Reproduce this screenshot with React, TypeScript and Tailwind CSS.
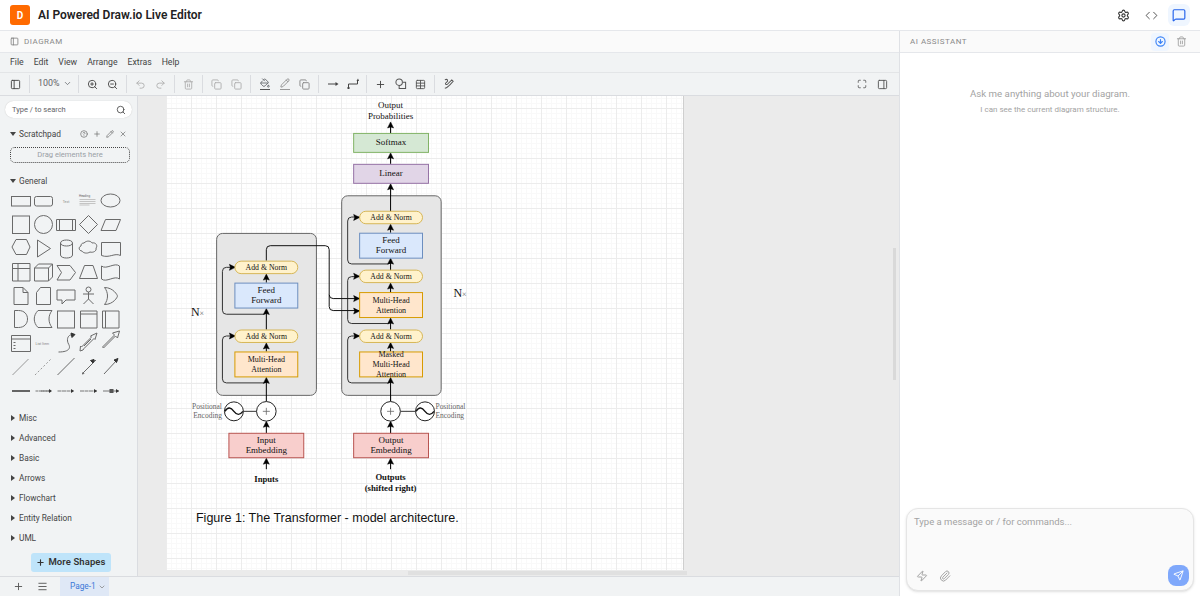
import {
  ChevronDown,
  CircleArrowDown,
  CircleHelp,
  Code,
  Copy,
  Maximize,
  Menu,
  MessageSquare,
  PaintBucket,
  Paperclip,
  PanelLeft,
  PanelRight,
  Pencil,
  Plus,
  Redo2,
  Search,
  Send,
  Settings,
  Table,
  Trash2,
  Undo2,
  X,
  Zap,
  ZoomIn,
  ZoomOut,
} from "lucide-react";
import { FC, ReactNode } from "react";

const Sep = () => <div className="mx-[3.5px] h-[18px] w-px shrink-0 bg-[#dadce0]" />;

const Tool: FC<{ children: ReactNode }> = ({ children }) => (
  <div className="flex h-5 w-5 shrink-0 items-center justify-center text-[#5f6368]">{children}</div>
);

const ArrowUp: FC<{ x: number; y: number }> = ({ x, y }) => (
  <polygon points={`${x},${y} ${x + 3},${y + 6} ${x},${y + 5} ${x - 3},${y + 6}`} fill="#000" stroke="#000" strokeWidth="0.5" />
);

const ArrowRight: FC<{ x: number; y: number }> = ({ x, y }) => (
  <polygon points={`${x},${y} ${x - 6},${y - 3} ${x - 5},${y} ${x - 6},${y + 3}`} fill="#000" stroke="#000" strokeWidth="0.5" />
);

const Up: FC<{ x: number; from: number; to: number }> = ({ x, from, to }) => (
  <g>
    <line x1={x} y1={from} x2={x} y2={to + 4} stroke="#000" />
    <ArrowUp x={x} y={to} />
  </g>
);

const Box: FC<{ x: number; y: number; h: number; w?: number; fill: string; stroke: string; lines: string[]; fs?: number; step?: number }> = ({
  x,
  y,
  h,
  w = 63,
  fill,
  stroke,
  lines,
  fs = 9,
  step = 10.3,
}) => {
  const start = y + h / 2 - ((lines.length - 1) * step) / 2 + 2.5;
  return (
    <g>
      <rect x={x} y={y} width={w} height={h} fill={fill} stroke={stroke} />
      {lines.map((l, i) => (
        <text key={l} x={x + w / 2} y={start + i * step} textAnchor="middle" fontSize={fs} fill="#111">
          {l}
        </text>
      ))}
    </g>
  );
};

const AddNorm: FC<{ x: number; y: number }> = ({ x, y }) => (
  <g>
    <rect x={x} y={y} width={63} height={12.5} rx={6.25} fill="#fff2cc" stroke="#d6b656" />
    <text x={x + 31.5} y={y + 8.8} textAnchor="middle" fontSize="7.8" fill="#111">
      Add &amp; Norm
    </text>
  </g>
);

const Plus2: FC<{ x: number; y: number }> = ({ x, y }) => (
  <g>
    <circle cx={x} cy={y} r={9.8} fill="#fff" stroke="#222" />
    <path d={`M${x - 3.5} ${y}h7M${x} ${y - 3.5}v7`} stroke="#666" fill="none" strokeWidth="0.8" />
  </g>
);

const Sine: FC<{ x: number; y: number }> = ({ x, y }) => (
  <g>
    <circle cx={x} cy={y} r={9.5} fill="#fff" stroke="#222" />
    <path d={`M${x - 9} ${y}c3 -5 6 -4 9 0s6 4 9 0`} stroke="#111" fill="none" strokeWidth="1.4" />
  </g>
);

const Diagram = () => (
  <svg viewBox="166 96 518 475" className="block h-full w-full font-['Liberation_Serif',serif]">
    {/* encoder */}
    <rect x="216.7" y="233.7" width="100" height="162.3" rx="6" fill="#e6e6e6" stroke="#666" />
    {/* decoder */}
    <rect x="342" y="196" width="99.7" height="200" rx="6" fill="#e6e6e6" stroke="#666" />

    <g fill="none" stroke="#333" strokeWidth="1">
      <path d="M266.5 381q0 2.5 -3 2.5h-37q-4 0 -4 -4v-39q0 -4 4 -4h9" />
      <path d="M266.5 312q0 2.7 -3 2.7h-37q-4 0 -4 -4v-39q0 -4 4 -4h9" />
      <path d="M391 381q0 2.5 -3 2.5h-36q-4 0 -4 -4v-39q0 -4 4 -4h8" />
      <path d="M391 321q0 3 -3 3h-36q-4 0 -4 -4v-39q0 -4 4 -4h8" />
      <path d="M391 262q0 2.3 -3 2.3h-36q-4 0 -4 -4v-39q0 -4 4 -4h8" />
    </g>
    <path d="M266.5 261v-11q0 -4 4 -4h55q4 0 4 4v45q0 4 4 4h27M329.5 295v12q0 4 4 4h27" fill="none" stroke="#111" />
    <ArrowRight x={235.5} y={267.7} />
    <ArrowRight x={235.5} y={336.5} />
    <ArrowRight x={360} y={217.7} />
    <ArrowRight x={360} y={276.7} />
    <ArrowRight x={360} y={336.5} />
    <ArrowRight x={360} y={299} />
    <ArrowRight x={360} y={311.5} />

    <Up x={391} from={134} to={122} />
    <Up x={391} from={164} to={153} />
    <Up x={391} from={212} to={184} />
    <Up x={391} from={233} to={224.5} />
    <Up x={391} from={271} to={258.5} />
    <Up x={391} from={293} to={283.5} />
    <Up x={391} from={330} to={318.5} />
    <Up x={391} from={352} to={343} />
    <Up x={391} from={402} to={378} />
    <Up x={391} from={434} to={422} />
    <Up x={391} from={470} to={459} />

    <Up x={266.5} from={283} to={274.5} />
    <Up x={266.5} from={330} to={309} />
    <Up x={266.5} from={352} to={343.5} />
    <Up x={266.5} from={402} to={378} />
    <Up x={266.5} from={434} to={422} />
    <Up x={266.5} from={470} to={459} />

    <line x1="243" y1="412" x2="257" y2="412" stroke="#333" />
    <line x1="401" y1="412" x2="416" y2="412" stroke="#333" />

    <text x="391" y="108" textAnchor="middle" fontSize="9" fill="#111">Output</text>
    <text x="391" y="119" textAnchor="middle" fontSize="9" fill="#111">Probabilities</text>

    <Box x={354} y={133.5} w={75} h={19} fill="#d5e8d4" stroke="#82b366" lines={["Softmax"]} />
    <Box x={354} y={164.5} w={75} h={19} fill="#e1d5e7" stroke="#9673a6" lines={["Linear"]} />

    <AddNorm x={360} y={211.5} />
    <Box x={360} y={233.5} h={25} fill="#dae8fc" stroke="#6c8ebf" lines={["Feed", "Forward"]} />
    <AddNorm x={360} y={270.5} />
    <Box x={360} y={293} h={25} fill="#ffe6cc" stroke="#d79b00" fs={8} step={10} lines={["Multi-Head", "Attention"]} />
    <AddNorm x={360} y={330.5} />
    <Box x={360} y={352.5} h={25} fill="#ffe6cc" stroke="#d79b00" fs={8} step={9.7} lines={["Masked", "Multi-Head", "Attention"]} />

    <AddNorm x={235} y={261.5} />
    <Box x={235} y={283.5} h={25} fill="#dae8fc" stroke="#6c8ebf" lines={["Feed", "Forward"]} />
    <AddNorm x={235} y={330.5} />
    <Box x={235} y={352.5} h={25} fill="#ffe6cc" stroke="#d79b00" fs={8} step={10} lines={["Multi-Head", "Attention"]} />

    <Plus2 x={266.5} y={412} />
    <Sine x={234} y={412} />
    <Plus2 x={391} y={412} />
    <Sine x={425.5} y={412} />

    <text x="222" y="409.5" textAnchor="end" fontSize="7.5" fill="#666">Positional</text>
    <text x="222" y="418.5" textAnchor="end" fontSize="7.5" fill="#666">Encoding</text>
    <text x="436" y="409.5" fontSize="7.5" fill="#666">Positional</text>
    <text x="436" y="418.5" fontSize="7.5" fill="#666">Encoding</text>

    <Box x={229} y={434} w={75} h={24.5} fill="#f8cecc" stroke="#b85450" lines={["Input", "Embedding"]} />
    <Box x={354} y={434} w={75} h={24.5} fill="#f8cecc" stroke="#b85450" lines={["Output", "Embedding"]} />

    <text x="266.5" y="483" textAnchor="middle" fontSize="8.7" fontWeight="700" fill="#111">Inputs</text>
    <text x="391" y="481" textAnchor="middle" fontSize="8.7" fontWeight="700" fill="#111">Outputs</text>
    <text x="391" y="491.5" textAnchor="middle" fontSize="8.8" fontWeight="700" fill="#111">(shifted right)</text>

    <text x="191" y="316" fontSize="12" fill="#111">N</text>
    <text x="199.5" y="316" fontSize="8" fill="#666">×</text>
    <text x="454" y="297" fontSize="12" fill="#111">N</text>
    <text x="462.5" y="297" fontSize="8" fill="#666">×</text>

    <text x="196" y="523" fontSize="12.55" fill="#111" className="font-['Liberation_Sans',sans-serif]">
      Figure 1: The Transformer - model architecture.
    </text>
  </svg>
);

const Palette = () => (
  <svg viewBox="0 186 137 214" className="block h-[214px] w-[137px]" fill="none" stroke="#6a6a6a" strokeWidth="1">
    {/* row 1 */}
    <rect x="11.5" y="195.5" width="19" height="9.5" />
    <rect x="34.5" y="195.5" width="18" height="9.5" rx="2" />
    <text x="66" y="201.5" textAnchor="middle" fontSize="3.5" stroke="none" fill="#888">Text</text>
    <text x="79" y="196" fontSize="3" stroke="none" fill="#666">Heading</text>
    <path d="M79.5 198.5h16M79.5 200.5h16M79.5 202.5h16M79.5 204h10" stroke="#c4c4c4" />
    <ellipse cx="110.5" cy="199.5" rx="9.5" ry="6.5" />
    {/* row 2 */}
    <rect x="12.5" y="215" width="17" height="17.5" />
    <circle cx="43.5" cy="223.5" r="9" />
    <path d="M56.5 218.5h19v11h-19zM59.5 218.5v11M72.5 218.5v11" />
    <path d="M88.5 214.5l9 9-9 9-9-9z" />
    <path d="M105.5 218.5h15l-4.5 11h-15z" />
    {/* row 3 */}
    <path d="M16 238.5h10.5l3.5 7.5-3.5 7.5h-10.5l-4-7.5z" />
    <path d="M37.5 239l13 8.5-13 8.5z" />
    <path d="M60.5 242c0-4 12-4 12 0v12c0 4-12 4-12 0zM60.5 242c0 4 12 4 12 0" />
    <path d="M84 242c3-3 7-2 8 0 4-1 6 3 4 5 1 3-3 5-6 4-3 2-7 1-8-1-3 0-4-4-1-5 0-2 1-3 3-3z" />
    <path d="M101.5 241.5h19v13c-6 -3-11 3-19 0z" />
    {/* row 4 */}
    <path d="M12.5 262.5h17.5v17.5h-17.5zM12.5 267.5h17.5M18 262.5v17.5" />
    <path d="M34.5 267l4-4h14v13l-4 4h-14zM34.5 267h14v13M48.5 267l4-4" />
    <path d="M57 264.5h13l5.5 7-5.5 7.5h-13l4.5-7.5z" />
    <path d="M84.5 264.5h8.5l4.5 13h-18z" />
    <path d="M101.5 265c5 4 13-4 18 0v13c-5-4-13 4-18 0z" />
    {/* row 5 */}
    <path d="M14 286.5h9l5 5v12h-14zM23 286.5v5h5" />
    <path d="M40.5 286.5h10v17h-14v-12z" />
    <path d="M57 289h18v10h-9l-4 4v-4h-5z" />
    <circle cx="88.5" cy="288.5" r="2.5" />
    <path d="M88.5 291v7M83 293h11M88.5 298l-5 5M88.5 298l5 5" />
    <path d="M104.5 286.5c9 0 13 8 13 8.5 0 1-4 8.5-13 8.5 4-5 4-12 0-17z" />
    {/* row 6 */}
    <path d="M14.5 309.5h4c6 0 9 4 9 8.5s-3 8.5-9 8.5h-4z" />
    <path d="M38 309.5h14c-4 5-4 12 0 17h-14c-5-5-5-12 0-17z" />
    <rect x="57.5" y="310" width="17" height="17" />
    <path d="M80.5 310h16.5v17h-16.5zM80.5 313h16.5" />
    <path d="M102.5 310h16.5v17h-16.5zM105.5 310v17" />
    {/* row 7 */}
    <path d="M11.5 334.5h19v16h-19zM11.5 338h19M15.5 341.5h-2M15.5 344.5h-2M15.5 347.5h-2" />
    <text x="35.5" y="344" fontSize="3.5" stroke="none" fill="#888">List Item</text>
    <path d="M58.5 351c12 0 12-5 10-8-2-4-1-8 2-9l3-.5" />
    <path d="M71 332l4 1.5-3 3z" fill="#333" stroke="#333" />
    <path d="M83 349l-3 1 .5-5 1 1 10-10-1-1 6.5-3-2 6.5-1-1-10 10z" />
    <path d="M84 345l7-7" />
    <path d="M102.5 346l12-12-2-2 7-2-2 7-2-2-12 12z" />
    {/* row 8 */}
    <path d="M12.5 374l16-16" stroke="#999" />
    <path d="M35 374l16-16" stroke="#999" strokeDasharray="2 2" />
    <path d="M57.5 374l17-17" />
    <path d="M82 373l14-14M94 359.5l-.5 2 2-2zM82 373l2-.5-1.5-1.5" />
    <path d="M104 373l13-14" />
    <path d="M118 357.5l-4 1.5 2.5 2.5z" fill="#333" stroke="#333" />
    <path d="M94 358.5l-3.5 1 2.5 2.5z" fill="#333" stroke="#333" />
    {/* row 9 */}
    <path d="M12 390h18" stroke="#555" strokeWidth="1.8" />
    <path d="M35.5 390h14M41 390h10" stroke="#777" strokeDasharray="3 0.5" />
    <path d="M49 388l3 2-3 2z" fill="#333" stroke="none" />
    <path d="M57.5 390h16" stroke="#777" strokeDasharray="4 0.5" />
    <path d="M71 388l3 2-3 2z" fill="#333" stroke="none" />
    <path d="M80 390h17" stroke="#777" strokeDasharray="4 0.5" />
    <path d="M94 388l3 2-3 2z" fill="#333" stroke="none" />
    <path d="M103 390h16" stroke="#777" />
    <rect x="109.5" y="388" width="4" height="4" fill="#555" stroke="none" />
    <path d="M116 388l3 2-3 2z" fill="#333" stroke="none" />
  </svg>
);

const categories = ["Misc", "Advanced", "Basic", "Arrows", "Flowchart", "Entity Relation", "UML"];

const Sidebar = () => (
  <aside className="flex w-[138px] shrink-0 flex-col border-r border-[#dadce0] bg-[#f1f3f4] text-[8.3px] text-[#444]">
    <div className="ml-[5px] mt-[5px] flex h-[17px] w-[127px] items-center justify-between rounded-full bg-white pl-[7px] pr-[6px] shadow-[0_0_1px_#bbb]">
      <span className="text-[7.5px] text-[#5f6368]">Type / to search</span>
      <Search size={10} className="text-[#444]" />
    </div>
    <div className="mt-[9px] flex h-[14px] items-center pl-[10px] pr-[10px]">
      <span className="mr-[3px] h-0 w-0 border-x-[3px] border-t-[4px] border-x-transparent border-t-[#444]" />
      <span>Scratchpad</span>
      <div className="ml-auto flex items-center gap-[5px] text-[#666]">
        <CircleHelp size={8} />
        <Plus size={8} />
        <Pencil size={8} />
        <X size={8} />
      </div>
    </div>
    <div className="ml-[10px] mt-[6px] flex h-4 w-[120px] items-center justify-center rounded-[5px] border border-dotted border-[#444] text-[7.6px] text-[#9aa0a6]">
      Drag elements here
    </div>
    <div className="mt-[12px] flex h-[12px] items-center pl-[10px]">
      <span className="mr-[3px] h-0 w-0 border-x-[3px] border-t-[4px] border-x-transparent border-t-[#444]" />
      <span>General</span>
    </div>
    <Palette />
    <div className="mt-[7px] flex flex-col">
      {categories.map((c) => (
        <div key={c} className="flex h-5 items-center pl-[11px]">
          <span className="mr-[4px] h-0 w-0 border-y-[3px] border-l-[4px] border-y-transparent border-l-[#444]" />
          <span>{c}</span>
        </div>
      ))}
    </div>
    <div className="ml-[31px] mt-[5px] flex h-[19px] w-[80px] items-center justify-center gap-[3px] rounded-[3px] bg-[#bfe4fa] text-[9.5px] font-semibold tracking-[0.1px] text-[#333]">
      <Plus size={9} strokeWidth={3} />
      More Shapes
    </div>
  </aside>
);

const DiagramPane = () => (
  <div className="flex w-[899px] shrink-0 flex-col">
    <div className="flex h-[22px] shrink-0 items-center gap-[5px] border-b border-[#e5e7eb] bg-[#fafafa] pl-[10px] text-[8px] tracking-[0.5px] text-[#8a8a8a]">
      <PanelLeft size={9} className="text-[#777]" />
      DIAGRAM
    </div>
    <div className="flex h-[20px] shrink-0 items-center gap-[10px] border-b border-[#e3e5e7] bg-[#f1f3f4] pl-[10px] pt-[1px] text-[8.7px] text-[#444]">
      <span>File</span>
      <span>Edit</span>
      <span>View</span>
      <span>Arrange</span>
      <span>Extras</span>
      <span>Help</span>
    </div>
    <div className="flex h-[23px] shrink-0 items-center border-b border-[#dadce0] bg-[#f1f3f4] pl-[5px] pr-[7px]">
      <Tool><PanelLeft size={11} className="text-[#444]" /></Tool>
      <Sep />
      <div className="flex w-[41.5px] items-center gap-[4px] pl-[5px] text-[8.9px] text-[#5f6368]">
        100%
        <ChevronDown size={9} />
      </div>
      <Sep />
      <Tool><ZoomIn size={11} className="text-[#444]" /></Tool>
      <Tool><ZoomOut size={11} className="text-[#444]" /></Tool>
      <Sep />
      <Tool><Undo2 size={11} className="text-[#b0b0b0]" /></Tool>
      <Tool><Redo2 size={11} className="text-[#b0b0b0]" /></Tool>
      <Sep />
      <Tool><Trash2 size={11} className="text-[#b0b0b0]" /></Tool>
      <Sep />
      <Tool><Copy size={11} className="text-[#b0b0b0]" /></Tool>
      <Tool><Copy size={11} className="text-[#b0b0b0]" /></Tool>
      <Sep />
      <Tool>
        <div className="flex flex-col items-center">
          <PaintBucket size={10} />
          <div className="mt-px h-px w-[10px] bg-[#555]" />
        </div>
      </Tool>
      <Tool>
        <div className="flex flex-col items-center">
          <Pencil size={10} className="text-[#888]" />
          <div className="mt-px h-px w-[10px] bg-[#999]" />
        </div>
      </Tool>
      <Tool><Copy size={11} className="text-[#888]" /></Tool>
      <Sep />
      <Tool>
        <svg width="12" height="12" viewBox="0 0 12 12" fill="none" stroke="#444">
          <path d="M1 6h8" />
          <path d="M8.5 4l3 2-3 2z" fill="#444" stroke="none" />
        </svg>
      </Tool>
      <Tool>
        <svg width="12" height="12" viewBox="0 0 12 12" fill="none" stroke="#444">
          <path d="M1.5 10v-4h9v-4" />
          <rect x="0.5" y="9" width="2" height="2" fill="#444" stroke="none" />
          <path d="M9.5 3l1.5-2.5 1 2.5z" fill="#444" stroke="none" />
        </svg>
      </Tool>
      <Sep />
      <Tool><Plus size={11} className="text-[#444]" /></Tool>
      <Tool>
        <svg width="12" height="12" viewBox="0 0 13 13" fill="none" stroke="#555" strokeWidth="1.1">
          <circle cx="4.5" cy="4.5" r="3.5" />
          <path d="M8.5 4.5h3v7h-7v-3" />
        </svg>
      </Tool>
      <Tool><Table size={11} className="text-[#555]" /></Tool>
      <Sep />
      <Tool>
        <svg width="12" height="12" viewBox="0 0 13 13" fill="none" stroke="#555" strokeWidth="1.1">
          <path d="M2 2c3-1.5 4 1 2 2.5s-2 3 1 2.5M2 11c3 0 3-2 5-3l4-4.5-1.5-1.5-4.5 4.5" />
        </svg>
      </Tool>
      <div className="ml-auto flex items-center">
        <Tool><Maximize size={10} className="text-[#555]" /></Tool>
        <Tool><PanelRight size={11} className="text-[#555]" /></Tool>
      </div>
    </div>
    <div className="flex min-h-0 flex-1">
      <Sidebar />
      <div className="relative min-w-0 flex-1 bg-[#ebebeb] pb-[6px] pl-[28px]">
        <div className="h-full w-[518px] border-r border-[#cfcfcf] bg-white bg-[linear-gradient(#ececec_1px,transparent_1px),linear-gradient(90deg,#ececec_1px,transparent_1px),linear-gradient(#f9f9f9_1px,transparent_1px),linear-gradient(90deg,#f9f9f9_1px,transparent_1px)] bg-[size:25px_25px,25px_25px,5px_5px,5px_5px] bg-[position:0_12px,0_0,0_2px,0_0]">
          <Diagram />
        </div>
        <div className="absolute bottom-[1px] left-[270px] h-[4px] w-[279px] bg-[#e0e0e0]" />
        <div className="absolute right-[3px] top-[152px] h-[132px] w-[3px] bg-[#d9d9d9]" />
      </div>
    </div>
    <div className="flex h-[20px] shrink-0 items-stretch border-t border-[#dadce0] bg-[#f1f3f4] text-[8.3px]">
      <div className="flex w-[60px] items-center gap-[13px] pl-[13px] text-[#555]">
        <Plus size={11} />
        <Menu size={11} />
      </div>
      <div className="flex w-[49px] items-center gap-[2px] bg-[#dfe8f6] pl-[10px] text-[#3b78d8]">
        Page-1
        <ChevronDown size={8} className="text-[#777]" />
      </div>
    </div>
  </div>
);

const ChatPane = () => (
  <div className="flex min-w-0 flex-1 flex-col border-l border-[#dfe1e5] bg-white">
    <div className="flex h-[22px] shrink-0 items-center border-b border-[#e5e7eb] bg-[#fafafa] pl-[10px] pr-[10px] text-[8px] tracking-[0.5px] text-[#8a8a8a]">
      AI ASSISTANT
      <div className="ml-auto flex items-center gap-[3px]">
        <div className="flex h-[18px] w-[18px] items-center justify-center rounded bg-[#eff6ff]">
          <CircleArrowDown size={11} strokeWidth={2.5} className="text-[#3b82f6]" />
        </div>
        <div className="flex h-[18px] w-[18px] items-center justify-center">
          <Trash2 size={11} className="text-[#a3a3a3]" />
        </div>
      </div>
    </div>
    <div className="flex flex-1 flex-col items-center pt-[33px] text-[#a3a3a3]">
      <div className="text-[9.7px] leading-[16px]">Ask me anything about your diagram.</div>
      <div className="mt-[1px] text-[8px] leading-[14px]">I can see the current diagram structure.</div>
    </div>
    <div className="mb-[5px] ml-[6px] mr-[6px] flex h-[83px] flex-col rounded-xl border border-[#e5e5e5] bg-[#fafafa] pl-[7px] pr-[4px] pt-[6px] shadow-sm">
      <div className="text-[9.5px] leading-[14px] text-[#a3a3a3]">Type a message or / for commands...</div>
      <div className="mb-[4px] mt-auto flex items-center">
        <Zap size={12} className="ml-[2px] text-[#a3a3a3]" />
        <Paperclip size={12} className="ml-[11px] text-[#a3a3a3]" />
        <div className="ml-auto flex h-[21px] w-[21px] items-center justify-center rounded-lg bg-[#7fa8fb]">
          <Send size={11} className="text-white" />
        </div>
      </div>
    </div>
  </div>
);

export default function App() {
  return (
    <div className="flex h-[596px] w-[1200px] flex-col overflow-hidden bg-white font-['Roboto',sans-serif]">
      <header className="flex h-[31px] shrink-0 items-center border-b border-[#e5e7eb] pl-[10px] pr-[10px] shadow-[0_1px_2px_rgba(0,0,0,0.05)]">
        <div className="flex h-5 w-5 items-center justify-center rounded-[3px] bg-[#ff6a00] text-[10px] font-bold text-white">D</div>
        <h1 className="ml-2 text-[12px] font-semibold text-[#222]">AI Powered Draw.io Live Editor</h1>
        <div className="ml-auto flex items-center">
          <Settings size={13} className="text-[#333]" />
          <Code size={13} strokeWidth={1.5} className="ml-[15px] text-[#333]" />
          <div className="ml-[10.5px] flex h-[22px] w-[22px] items-center justify-center rounded-md bg-[#eff6ff]">
            <MessageSquare size={14} className="text-[#2563eb]" />
          </div>
        </div>
      </header>
      <main className="flex min-h-0 flex-1">
        <DiagramPane />
        <ChatPane />
      </main>
    </div>
  );
}
